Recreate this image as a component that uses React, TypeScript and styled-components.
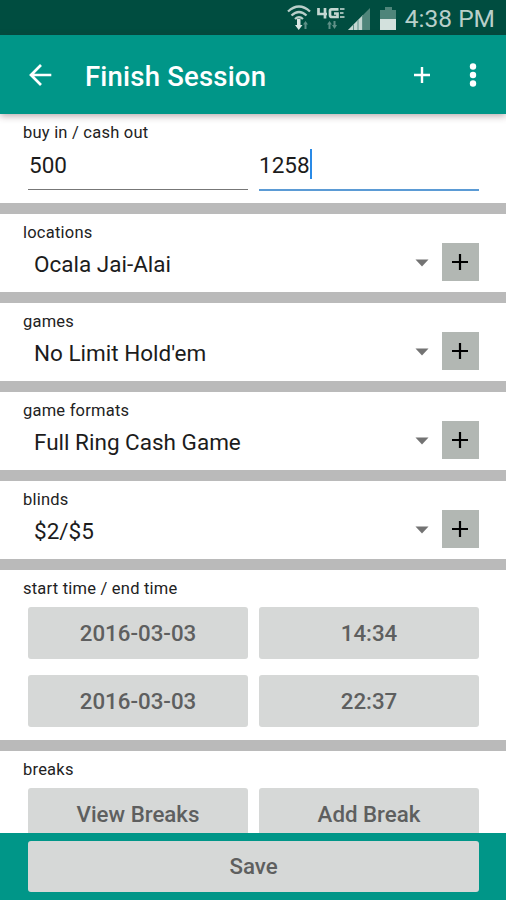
import React from "react";
import styled, { createGlobalStyle } from "styled-components";

const teal = "#009688";

const GlobalStyle = createGlobalStyle`
  *, *::before, *::after { box-sizing: border-box; }
  body { margin: 0; background: #fff; font-family: Roboto, "Liberation Sans", sans-serif; }
  button, input { font: inherit; border: 0; padding: 0; margin: 0; }
`;

const Screen = styled.div`
  width: 506px;
  height: 900px;
  display: flex;
  flex-direction: column;
  overflow: hidden;
  background: #fff;
`;

const StatusBar = styled.div`
  flex: none;
  height: 35px;
  display: flex;
  align-items: center;
  justify-content: flex-end;
  padding: 3px 11px 0 0;
  background: #004d40;
  color: #b9cfca;
`;

const StatusIcons = styled.svg`
  width: 112px;
  height: 30px;
  margin: 0 6px 2px 0;
`;

const Clock = styled.span`
  font-size: 24.5px;
  line-height: 32px;
  white-space: nowrap;
`;

const AppBar = styled.header`
  flex: none;
  height: 79px;
  display: flex;
  align-items: center;
  padding: 0 21px 0 28px;
  background: ${teal};
  color: #fff;
  box-shadow: 0 2px 7px rgba(70, 30, 40, 0.38);
  z-index: 1;
`;

const Title = styled.h1`
  flex: 1;
  margin: 5px 0 0 33px;
  font-size: 27.5px;
  font-weight: 500;
  line-height: 36px;
  letter-spacing: 0.2px;
`;

const BarButton = styled.button<{ $width: number; $gap?: number }>`
  width: ${(p) => p.$width}px;
  height: 24px;
  margin-left: ${(p) => p.$gap ?? 0}px;
  background: none;
  color: inherit;
  display: flex;
  justify-content: center;
  align-items: center;
`;

const Form = styled.main`
  flex: 1;
  min-height: 0;
  overflow: hidden;
  display: flex;
  flex-direction: column;
  gap: 11px;
  background: #bababa;
`;

const Section = styled.section<{ $height: number }>`
  flex: none;
  height: ${(p) => p.$height}px;
  padding: 9px 27px 0 23px;
  background: #fff;
`;

const Label = styled.div`
  height: 20px;
  font-size: 16.5px;
  line-height: 20px;
  letter-spacing: 0.22px;
  color: #222;
`;

const Pair = styled.div<{ $top: number; $rowGap?: number }>`
  display: grid;
  grid-template-columns: 220px 220px;
  column-gap: 11px;
  row-gap: ${(p) => p.$rowGap ?? 0}px;
  margin: ${(p) => p.$top}px 0 0 5px;
`;

const Field = styled.div<{ $active?: boolean }>`
  height: ${(p) => (p.$active ? 47 : 46)}px;
  display: flex;
  align-items: flex-start;
  padding-left: ${(p) => (p.$active ? 0 : 1)}px;
  font-size: 22.5px;
  line-height: 42px;
  color: #1c1c1c;
  border-bottom: ${(p) => (p.$active ? "2px solid #5b9bd5" : "1px solid #777")};
`;

const Caret = styled.span`
  width: 2px;
  height: 30px;
  margin-top: 5px;
  background: #2a8ae6;
`;

const SelectRow = styled.div`
  display: flex;
  align-items: center;
  height: 38px;
  padding-left: 11px;
`;

const Value = styled.span`
  flex: 1;
  padding-top: 4px;
  font-size: 22.5px;
  line-height: 38px;
  color: #1c1c1c;
`;

const Arrow = styled.svg`
  width: 14px;
  height: 8px;
  margin: 2px 13px 0 0;
`;

const AddButton = styled.button`
  width: 37px;
  height: 38px;
  background: #b2b7b3;
  display: flex;
  align-items: center;
  justify-content: center;
  padding: 0 1px 1px 0;
`;

const GreyButton = styled.button<{ $height?: number }>`
  width: 100%;
  height: ${(p) => p.$height ?? 52}px;
  border-radius: 3px;
  background: #d6d8d7;
  color: #5e5f5f;
  font-size: 22.3px;
  font-weight: 500;
  line-height: ${(p) => p.$height ?? 52}px;
`;

const Footer = styled.footer`
  flex: none;
  height: 67px;
  padding: 8px 27px 0 28px;
  background: ${teal};
`;

const Plus = ({ size, thickness }: { size: number; thickness: number }) => (
  <svg width={size} height={size} viewBox="0 0 16 16">
    <path d="M8 0V16M0 8H16" stroke="currentColor" strokeWidth={thickness} />
  </svg>
);

const StatusGlyphs = () => (
  <StatusIcons viewBox="0 0 112 30">
    <g fill="none" stroke="#b9cfca" strokeWidth="2.3">
      <path d="M1 8.5Q12 -1.5 23 8.5" />
      <path d="M4.5 12.5Q12 5.500 19.500 12.500" />
      <path d="M8 16Q12 12.500 16 16" />
    </g>
    <path d="M10 16h3.500v6h2l-3.750 5-3.750-5h2z" fill="#dbe7e4" />
    <path d="M17.500 26v-4.500h-1.500l2.500-3.500 2.500 3.500h-1.500v4.500z" fill="#5f9087" />
    <g fill="none" stroke="#c4d7d2" strokeWidth="2.700">
      <path d="M31.500 5V11H40M38 5V15.500" />
      <path d="M51.500 6.300H44.500Q43 6.300 43 8V12Q43 14 45 14H50.500V10.500H47" />
    </g>
    <path d="M53 5h4.500v2H53zM53 9h3.500v2H53zM53 13h4.500v2H53z" fill="#9bbab3" />
    <path d="M41.500 26v-4.500h-1.500l2.500-3.500 2.500 3.500h-1.500v4.500zM46.500 18h2v4h1.500l-2.500 4-2.500-4h1.500z" fill="#5f9087" />
    <path d="M83 5V27H61z" fill="#4f857a" />
    <path d="M75 13V27H61z" fill="#c4d7d2" />
    <path d="M66.500 21v6M71 17v10M75.500 12v15" stroke="#5f9087" strokeWidth="1" />
    <path d="M98 4h7v3h4v9H93V7h5z" fill="#4f857a" />
    <path d="M93 16h16v11H93z" fill="#d3e1dd" />
  </StatusIcons>
);

const selections = [
  { label: "locations", value: "Ocala Jai-Alai" },
  { label: "games", value: "No Limit Hold'em" },
  { label: "game formats", value: "Full Ring Cash Game" },
  { label: "blinds", value: "$2/$5" },
];

const times = ["2016-03-03", "14:34", "2016-03-03", "22:37"];

export default function App() {
  return (
    <>
      <GlobalStyle />
      <Screen>
        <StatusBar>
          <StatusGlyphs />
          <Clock>4:38 PM</Clock>
        </StatusBar>
        <AppBar>
          <BarButton $width={24} aria-label="Back">
            <svg width="24" height="24" viewBox="0 0 24 24" fill="none" stroke="currentColor" strokeWidth="2.700">
              <path d="M23.300 12H3M13 2L3 12L13 22" />
            </svg>
          </BarButton>
          <Title>Finish Session</Title>
          <BarButton $width={24} aria-label="Add">
            <Plus size={16} thickness={2.4} />
          </BarButton>
          <BarButton $width={24} $gap={27} aria-label="More">
            <svg width="8" height="24" viewBox="0 0 8 24" fill="currentColor">
              <circle cx="4" cy="3.500" r="3.200" />
              <circle cx="4" cy="12" r="3.200" />
              <circle cx="4" cy="20.500" r="3.200" />
            </svg>
          </BarButton>
        </AppBar>
        <Form>
          <Section $height={89}>
            <Label>buy in / cash out</Label>
            <Pair $top={1}>
              <Field>500</Field>
              <Field $active>
                1258
                <Caret />
              </Field>
            </Pair>
          </Section>
          {selections.map((s) => (
            <Section key={s.label} $height={78}>
              <Label>{s.label}</Label>
              <SelectRow>
                <Value>{s.value}</Value>
                <Arrow viewBox="0 0 14 8">
                  <path d="M0.500 0.500H13.500L7 7.500z" fill="#737373" />
                </Arrow>
                <AddButton aria-label={`Add ${s.label}`}>
                  <Plus size={16} thickness={2.2} />
                </AddButton>
              </SelectRow>
            </Section>
          ))}
          <Section $height={170}>
            <Label>start time / end time</Label>
            <Pair $top={8} $rowGap={16}>
              {times.map((t, i) => (
                <GreyButton key={i}>{t}</GreyButton>
              ))}
            </Pair>
          </Section>
          <Section $height={120}>
            <Label>breaks</Label>
            <Pair $top={8}>
              <GreyButton>View Breaks</GreyButton>
              <GreyButton>Add Break</GreyButton>
            </Pair>
          </Section>
        </Form>
        <Footer>
          <GreyButton $height={51}>Save</GreyButton>
        </Footer>
      </Screen>
    </>
  );
}
